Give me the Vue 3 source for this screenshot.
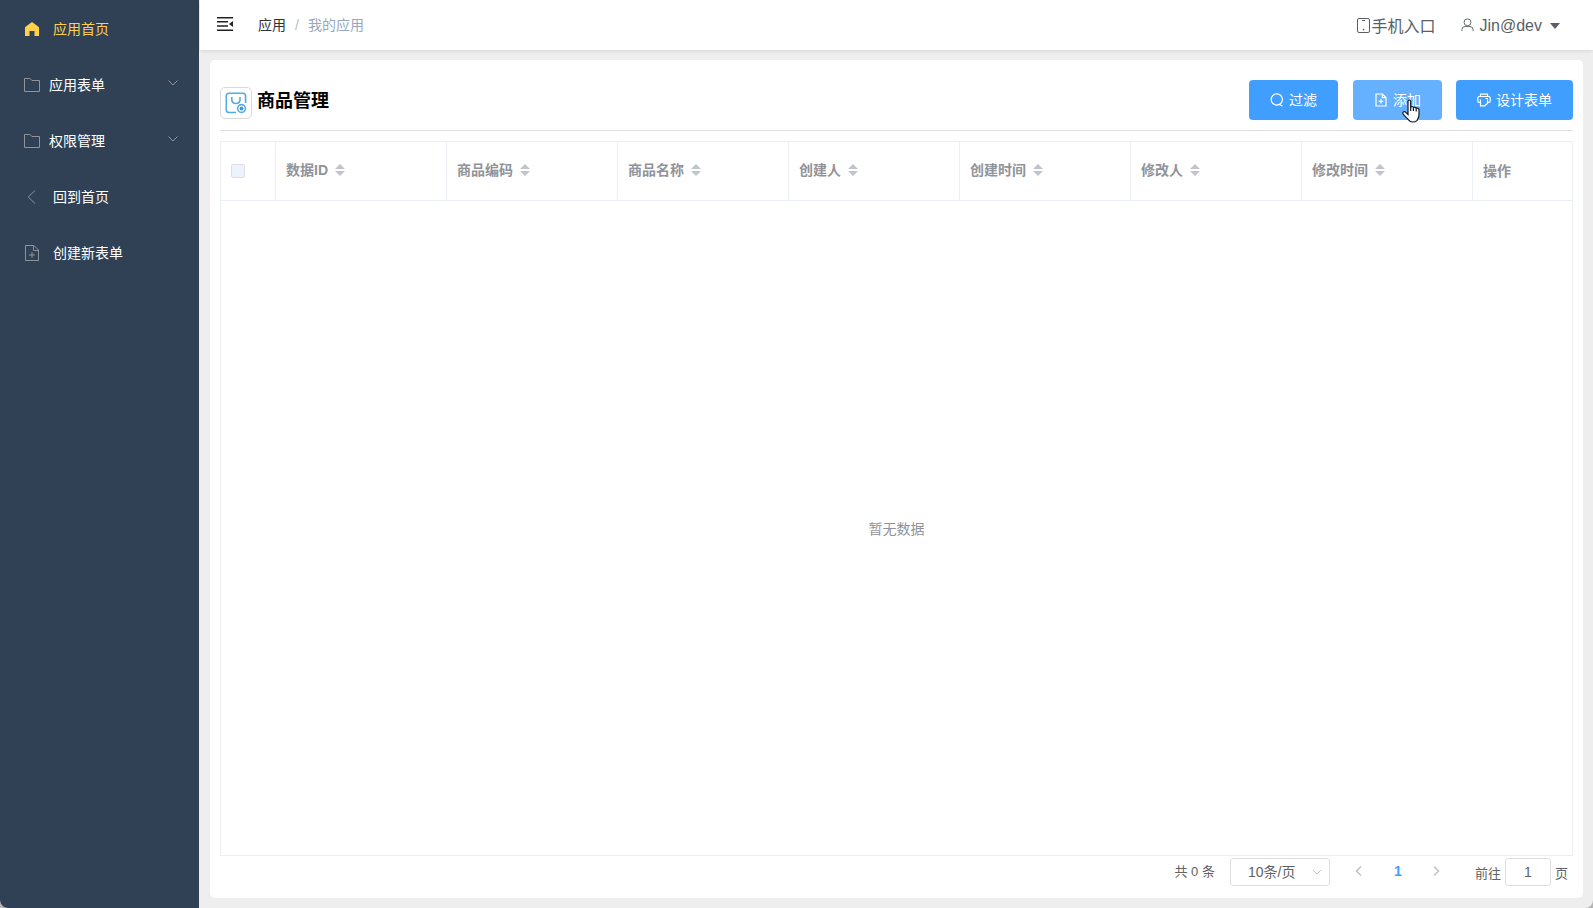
<template>
    <div class="layout">
        <aside class="sidebar">
            <div
                v-for="item in menus"
                :key="item.title"
                class="menu-item"
                :class="{ active: item.active, submenu: item.children }"
            >
                <svg class="menu-icon" viewBox="0 0 18 18">
                    <path :d="icons[item.icon]" :class="item.active ? 'solid' : 'line'" />
                </svg>
                <span class="menu-title">{{ item.title }}</span>
                <svg v-if="item.children" class="menu-arrow" viewBox="0 0 12 12">
                    <path d="M1.500 3.500L6 8l4.500-4.500" class="line" />
                </svg>
            </div>
        </aside>

        <div class="main">
            <header class="navbar">
                <svg class="hamburger" viewBox="0 0 16 14">
                    <path d="M0 0h16v1.500H0zM0 4h11v1.500H0zM0 8.300h11v1.500H0zM0 12.500h16V14H0zM16 4v6l-4-3z" />
                </svg>
                <div class="breadcrumb">
                    <span class="crumb">应用</span>
                    <span class="separator">/</span>
                    <span class="crumb last">我的应用</span>
                </div>
                <div class="mobile-entry">
                    <svg class="phone-icon" viewBox="0 0 13 15">
                        <path d="M2 .5h9q1.500 0 1.500 1.500v11q0 1.500-1.500 1.500H2Q.5 14.500.5 13V2Q.5.5 2 .5zM5 2.500h3" />
                        <path d="M5.800 11.500h1.400" class="dot" />
                    </svg>
                    <span>手机入口</span>
                </div>
                <div class="user">
                    <svg class="user-icon" viewBox="0 0 14 15">
                        <circle cx="7" cy="4.600" r="3.700" />
                        <path d="M1 14v-1.500q0-3.300 3.300-3.300h5.400q3.300 0 3.300 3.300V14" />
                    </svg>
                    <span class="user-name">Jin@dev</span>
                    <i class="caret"></i>
                </div>
            </header>

            <section class="card">
                <div class="card-header">
                    <div class="app-icon">
                        <svg viewBox="0 0 22 22">
                            <path d="M11 20.500H4Q1.300 20.500 1.300 18V4Q1.300 1.300 4 1.300H18Q20.600 1.300 20.600 4V11" />
                            <path d="M6.800 5v2.600q0 3.900 4.100 3.900T15 7.600V5" />
                            <circle cx="16.500" cy="16.500" r="3.900" />
                            <circle cx="16.500" cy="16.500" r="1.900" class="solid" />
                        </svg>
                    </div>
                    <h2 class="title">商品管理</h2>
                    <div class="actions">
                        <button class="btn">
                            <svg viewBox="0 0 14 14">
                                <circle cx="6.800" cy="6.500" r="5.600" />
                                <path d="M9.500 11.500l3 1.500" />
                            </svg>
                            <span>过滤</span>
                        </button>
                        <button class="btn hover">
                            <svg viewBox="0 0 14 14">
                                <path d="M2 1h6.500L12 4.500v8.500H2zM8.300 1v3.700H12M4.700 8.300h4.600M7 6v4.600" />
                            </svg>
                            <span>添加</span>
                            <!-- puntero sobre el botón -->
                            <svg class="cursor" viewBox="0 0 18 24">
                                <path
                                    d="M6 14V2.500Q6 1 7.300 1T8.700 2.500V8q1.700-1.200 2.700.5 1.800-.9 2.800.7 2.800-.5 2.800 2v4.600q0 2-1 3.500-.8 1.500-.8 2-1.700 1.700-4.700 1.700-2.500 0-3.700-1.800L1.300 15.500Q.3 13.500 1.500 12.800q1.500-.8 3 1.200L6 15.500z"
                                />
                                <path d="M8.700 7.500V12M11.400 8.500V12M14.200 9.200V12.500" />
                            </svg>
                        </button>
                        <button class="btn">
                            <svg viewBox="0 0 14 14">
                                <path d="M3.500 3.500V1.200h7v2.300M3.500 9.300H2.200Q.8 9.300.8 7.900V4.900q0-1.400 1.400-1.400h9.600q1.400 0 1.400 1.400v3q0 1.400-1.400 1.400h-1.300M3.500 6.500v6.300h4.200l2.800-2.300V6.500M8.500 5.500h2.500" />
                            </svg>
                            <span>设计表单</span>
                        </button>
                    </div>
                </div>

                <div class="table">
                    <div class="table-head">
                        <div class="th"><i class="checkbox"></i></div>
                        <div v-for="col in columns" :key="col" class="th">
                            <span class="label">{{ col }}</span>
                            <span class="sort">
                                <i class="up"></i>
                                <i class="down"></i>
                            </span>
                        </div>
                        <div class="th operate"><span class="label">操作</span></div>
                    </div>
                    <div class="table-empty">暂无数据</div>
                </div>

                <div class="pagination">
                    <span class="total">共 0 条</span>
                    <div class="select">
                        <span>10条/页</span>
                        <svg viewBox="0 0 12 12"><path d="M2 4l4 4 4-4" /></svg>
                    </div>
                    <svg class="page-arrow" viewBox="0 0 12 12"><path d="M8 1.500L3.500 6 8 10.500" /></svg>
                    <span class="page">1</span>
                    <svg class="page-arrow" viewBox="0 0 12 12"><path d="M4 1.500L8.500 6 4 10.500" /></svg>
                    <span class="jump">前往</span>
                    <input v-model="currentPage" class="page-input" type="text" />
                    <span class="jump-end">页</span>
                </div>
            </section>
        </div>
    </div>
</template>

<script setup>
import { ref } from "vue";

const currentPage = ref("1");

const menus = [
    { title: "应用首页", icon: "home", active: true },
    { title: "应用表单", icon: "folder", children: true },
    { title: "权限管理", icon: "folder", children: true },
    { title: "回到首页", icon: "back" },
    { title: "创建新表单", icon: "document" },
];

const icons = {
    home: "M9 2L15.500 6.800Q16 7.200 16 8V16H11.500V11H6.500V16H2V8Q2 7.200 2.500 6.800z",
    folder: "M1.500 15.500V2.500H7L9 4.500H16.500V15.500z",
    back: "M12 2.500L5.200 9l6.800 6.500",
    document: "M2.500 1.500H11L15.500 6V16.500H2.500zM10.500 1.500V6.500H15.500M6 11H12M9 8V14",
};

const columns = ["数据ID", "商品编码", "商品名称", "创建人", "创建时间", "修改人", "修改时间"];
</script>

<style>
body {
    margin: 0;
    background: #eee;
}
</style>

<style scoped>
.layout {
    display: flex;
    height: 908px;
    overflow: hidden;
    border-radius: 0 0 8px 8px;
    background: #eee;
    box-shadow: 0 0 0 8px #b5b5b5;
    font-family: "Liberation Sans", "Noto Sans CJK SC", sans-serif;
    font-size: 14px;
    color: #606266;
}

.layout * {
    box-sizing: border-box;
}

svg {
    display: block;
    flex: none;
    fill: none;
}

.sidebar {
    flex: none;
    width: 199px;
    margin-right: 1px;
    padding-top: 1px;
    background: #304156;
}

.menu-item {
    display: flex;
    align-items: center;
    height: 56px;
    padding: 0 20px 0 23px;
    color: #fff;
}

.menu-title {
    padding-bottom: 2px;
}

.menu-icon {
    width: 18px;
    height: 18px;
    margin-right: 12px;
}

.submenu .menu-icon {
    margin-right: 8px;
}

.menu-icon .line,
.menu-arrow .line {
    stroke: #909399;
}

.menu-icon .solid {
    fill: #ffd04b;
}

.menu-item.active {
    color: #ffd04b;
}

.menu-arrow {
    width: 12px;
    height: 12px;
    margin: -4px 0 0 auto;
}

.main {
    flex: 1;
    display: flex;
    flex-direction: column;
}

.navbar {
    display: flex;
    align-items: center;
    height: 50px;
    padding: 0 33px 0 17px;
    background: #fff;
    box-shadow: 0 1px 4px rgba(0, 21, 41, 0.1);
}

.hamburger {
    width: 16px;
    height: 14px;
    margin: -2px 25px 0 0;
    fill: #222;
}

.breadcrumb {
    display: flex;
    align-items: center;
    padding-bottom: 2px;
    color: #303133;
}

.separator {
    margin: 2px 9px 0;
    color: #b4bccc;
}

.crumb.last {
    color: #97a8be;
}

.mobile-entry {
    display: flex;
    align-items: center;
    margin-left: auto;
    font-size: 16px;
    color: #5a5e66;
}

.mobile-entry span {
    padding-bottom: 1px;
}

.phone-icon {
    width: 13px;
    height: 15px;
    margin-right: 1px;
    stroke: #5a5e66;
}

.phone-icon .dot {
    stroke-width: 1.5;
}

.user {
    display: flex;
    align-items: center;
    margin-left: 25px;
    font-size: 16px;
    color: #5a5e66;
}

.user-name {
    padding-top: 2px;
}

.user-icon {
    width: 13px;
    height: 14px;
    margin-right: 6px;
    stroke: #5a5e66;
}

.caret {
    margin: 1px 0 0 8px;
    border: 5px solid transparent;
    border-top: 6px solid #5a5e66;
    border-bottom: 0;
}

.card {
    display: flex;
    flex-direction: column;
    height: 838px;
    margin: 10px 10px 0;
    padding: 20px 10px 0;
    border-radius: 5px;
    background: #fff;
}

.card-header {
    display: flex;
    align-items: flex-start;
    height: 51px;
    border-bottom: 1px solid #dcdfe6;
}

.app-icon {
    width: 32px;
    height: 32px;
    margin-top: 7px;
    padding: 4px;
    border: 1px solid #d9d9d9;
    border-radius: 5px;
}

.app-icon svg {
    width: 22px;
    height: 22px;
    stroke: #53ace4;
    stroke-width: 1.6;
}

.app-icon .solid {
    fill: #2f9be0;
    stroke: none;
}

.title {
    margin: 8px 0 0 5px;
    font-size: 18px;
    line-height: 26px;
    color: #000;
}

.actions {
    display: flex;
    margin-left: auto;
}

.btn {
    position: relative;
    display: flex;
    align-items: center;
    justify-content: center;
    width: 89px;
    height: 40px;
    margin-right: 15px;
    padding: 0;
    border: none;
    border-radius: 4px;
    background: #409eff;
    color: #fff;
    font: inherit;
}

.btn span {
    padding-bottom: 2px;
}

.btn svg {
    width: 14px;
    height: 14px;
    margin-right: 5px;
    stroke: #fff;
    stroke-width: 1.2;
}

.btn.hover {
    margin-right: 14px;
    background: #66b1ff;
}

.btn:last-child {
    width: 117px;
    margin-right: 0;
}

.btn .cursor {
    position: absolute;
    top: 19px;
    left: 49px;
    width: 18px;
    height: 24px;
    margin: 0;
    fill: #fff;
    stroke: #111827;
    z-index: 1;
}

.table {
    display: flex;
    flex-direction: column;
    height: 715px;
    margin-top: 10px;
    border: 1px solid #ebeef5;
}

.table-head {
    display: grid;
    grid-template-columns: 55px repeat(7, 171px) 1fr;
    height: 59px;
    border-bottom: 1px solid #ebeef5;
    color: #909399;
    font-weight: bold;
}

.th {
    display: flex;
    align-items: center;
    padding: 0 10px 1px;
    border-right: 1px solid #ebeef5;
}

.th:last-child {
    border-right: none;
}

.label {
    padding-bottom: 3px;
}

.operate {
    padding-top: 2px;
}

.checkbox {
    width: 14px;
    height: 14px;
    margin-top: 1px;
    border: 1px solid #dcdfe6;
    border-radius: 2px;
    background: #edf2fc;
}

.sort {
    display: flex;
    flex-direction: column;
    gap: 2px;
    margin: -1px 0 0 7px;
}

.sort i {
    border: 5px solid transparent;
}

.sort .up {
    border-top: 0;
    border-bottom-color: #c0c4cc;
}

.sort .down {
    border-bottom: 0;
    border-top-color: #c0c4cc;
}

.table-empty {
    flex: 1;
    display: flex;
    align-items: center;
    justify-content: center;
    color: #909399;
}

.pagination {
    display: flex;
    align-items: center;
    justify-content: flex-end;
    height: 28px;
    margin-top: 2px;
    padding-right: 5px;
    font-size: 13px;
}

.total {
    margin: -3px 15px 0 0;
}

.select {
    display: flex;
    align-items: center;
    width: 100px;
    height: 28px;
    padding: 0 6px 0 17px;
    border: 1px solid #dcdfe6;
    border-radius: 3px;
    font-size: 14px;
}

.select span {
    padding-bottom: 2px;
}

.select svg {
    width: 12px;
    height: 12px;
    margin-left: auto;
    stroke: #c0c4cc;
}

.page-arrow {
    width: 12px;
    height: 12px;
    margin: -2px 0 0 23px;
    stroke: #c0c4cc;
    stroke-width: 1.6;
}

.page {
    width: 8px;
    margin: -2px 6px 0 29px;
    color: #409eff;
    font-size: 14px;
    font-weight: bold;
}

.page + .page-arrow {
    margin-left: 22px;
}

.jump {
    margin-left: 33px;
}

.page-input {
    width: 46px;
    height: 28px;
    margin: 0 4px;
    padding: 0;
    border: 1px solid #dcdfe6;
    border-radius: 3px;
    color: #606266;
    font: 14px "Liberation Sans", sans-serif;
    text-align: center;
}
</style>
